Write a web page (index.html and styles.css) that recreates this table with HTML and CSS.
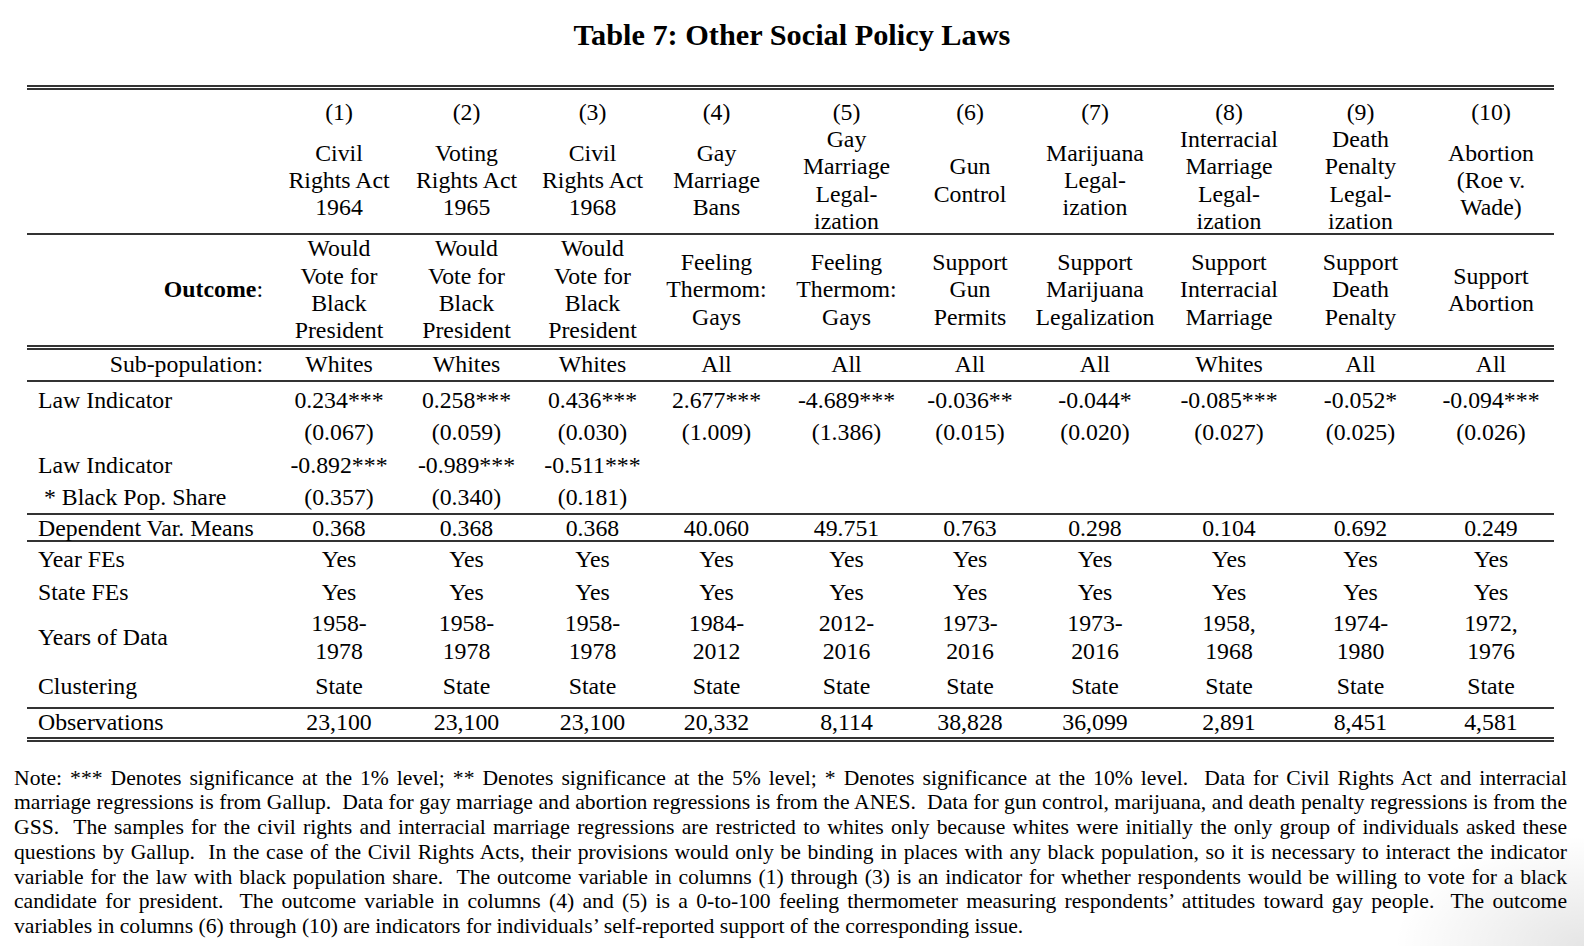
FILE: index.html
```html
<!DOCTYPE html>
<html lang="en">
<head>
<meta charset="utf-8">
<title>Table 7: Other Social Policy Laws</title>
<link rel="stylesheet" href="styles.css">
</head>
<body>
<main class="page">
  <h1 class="title">Table 7: Other Social Policy Laws</h1>

  <div class="tbl">
    <div class="rule-double"></div>

    <div class="row h-num">
      <div class="lab"></div>
      <div>(1)</div><div>(2)</div><div>(3)</div><div>(4)</div><div>(5)</div>
      <div>(6)</div><div>(7)</div><div>(8)</div><div>(9)</div><div>(10)</div>
    </div>

    <div class="row h-name">
      <div class="lab"></div>
      <div>Civil<br>Rights Act<br>1964</div>
      <div>Voting<br>Rights Act<br>1965</div>
      <div>Civil<br>Rights Act<br>1968</div>
      <div>Gay<br>Marriage<br>Bans</div>
      <div>Gay<br>Marriage<br>Legal-<br>ization</div>
      <div>Gun<br>Control</div>
      <div>Marijuana<br>Legal-<br>ization</div>
      <div>Interracial<br>Marriage<br>Legal-<br>ization</div>
      <div>Death<br>Penalty<br>Legal-<br>ization</div>
      <div>Abortion<br>(Roe v.<br>Wade)</div>
    </div>

    <div class="rule"></div>

    <div class="row h-out">
      <div class="lab-r"><b>Outcome</b>:</div>
      <div>Would<br>Vote for<br>Black<br>President</div>
      <div>Would<br>Vote for<br>Black<br>President</div>
      <div>Would<br>Vote for<br>Black<br>President</div>
      <div>Feeling<br>Thermom:<br>Gays</div>
      <div>Feeling<br>Thermom:<br>Gays</div>
      <div>Support<br>Gun<br>Permits</div>
      <div>Support<br>Marijuana<br>Legalization</div>
      <div>Support<br>Interracial<br>Marriage</div>
      <div>Support<br>Death<br>Penalty</div>
      <div>Support<br>Abortion</div>
    </div>

    <div class="rule-double"></div>

    <div class="row h-sub">
      <div class="lab-r">Sub-population:</div>
      <div>Whites</div><div>Whites</div><div>Whites</div><div>All</div><div>All</div>
      <div>All</div><div>All</div><div>Whites</div><div>All</div><div>All</div>
    </div>

    <div class="rule"></div>

    <div class="coef">
      <div class="row h-c1">
        <div class="lab">Law Indicator</div>
        <div>0.234***</div><div>0.258***</div><div>0.436***</div><div>2.677***</div><div>-4.689***</div>
        <div>-0.036**</div><div>-0.044*</div><div>-0.085***</div><div>-0.052*</div><div>-0.094***</div>
      </div>
      <div class="row h-c2">
        <div class="lab"></div>
        <div>(0.067)</div><div>(0.059)</div><div>(0.030)</div><div>(1.009)</div><div>(1.386)</div>
        <div>(0.015)</div><div>(0.020)</div><div>(0.027)</div><div>(0.025)</div><div>(0.026)</div>
      </div>
      <div class="row h-c3">
        <div class="lab">Law Indicator</div>
        <div>-0.892***</div><div>-0.989***</div><div>-0.511***</div><div></div><div></div>
        <div></div><div></div><div></div><div></div><div></div>
      </div>
      <div class="row h-c4">
        <div class="lab lab-in">* Black Pop. Share</div>
        <div>(0.357)</div><div>(0.340)</div><div>(0.181)</div><div></div><div></div>
        <div></div><div></div><div></div><div></div><div></div>
      </div>
    </div>

    <div class="rule"></div>

    <div class="row h-dep">
      <div class="lab">Dependent Var. Means</div>
      <div>0.368</div><div>0.368</div><div>0.368</div><div>40.060</div><div>49.751</div>
      <div>0.763</div><div>0.298</div><div>0.104</div><div>0.692</div><div>0.249</div>
    </div>

    <div class="rule"></div>

    <div class="row h-year">
      <div class="lab">Year FEs</div>
      <div>Yes</div><div>Yes</div><div>Yes</div><div>Yes</div><div>Yes</div>
      <div>Yes</div><div>Yes</div><div>Yes</div><div>Yes</div><div>Yes</div>
    </div>
    <div class="row h-state">
      <div class="lab">State FEs</div>
      <div>Yes</div><div>Yes</div><div>Yes</div><div>Yes</div><div>Yes</div>
      <div>Yes</div><div>Yes</div><div>Yes</div><div>Yes</div><div>Yes</div>
    </div>
    <div class="row h-years">
      <div class="lab">Years of Data</div>
      <div>1958-<br>1978</div><div>1958-<br>1978</div><div>1958-<br>1978</div><div>1984-<br>2012</div><div>2012-<br>2016</div>
      <div>1973-<br>2016</div><div>1973-<br>2016</div><div>1958,<br>1968</div><div>1974-<br>1980</div><div>1972,<br>1976</div>
    </div>
    <div class="row h-clus">
      <div class="lab">Clustering</div>
      <div>State</div><div>State</div><div>State</div><div>State</div><div>State</div>
      <div>State</div><div>State</div><div>State</div><div>State</div><div>State</div>
    </div>

    <div class="rule"></div>

    <div class="row h-obs">
      <div class="lab">Observations</div>
      <div>23,100</div><div>23,100</div><div>23,100</div><div>20,332</div><div>8,114</div>
      <div>38,828</div><div>36,099</div><div>2,891</div><div>8,451</div><div>4,581</div>
    </div>

    <div class="rule-double"></div>
  </div>

  <p class="note">
    <span class="ln">Note: *** Denotes significance at the 1% level; ** Denotes significance at the 5% level; * Denotes significance at the 10% level.&nbsp; Data for Civil Rights Act and interracial</span>
    <span class="ln">marriage regressions is from Gallup.&nbsp; Data for gay marriage and abortion regressions is from the ANES.&nbsp; Data for gun control, marijuana, and death penalty regressions is from the</span>
    <span class="ln">GSS.&nbsp; The samples for the civil rights and interracial marriage regressions are restricted to whites only because whites were initially the only group of individuals asked these</span>
    <span class="ln">questions by Gallup.&nbsp; In the case of the Civil Rights Acts, their provisions would only be binding in places with any black population, so it is necessary to interact the indicator</span>
    <span class="ln">variable for the law with black population share.&nbsp; The outcome variable in columns (1) through (3) is an indicator for whether respondents would be willing to vote for a black</span>
    <span class="ln">candidate for president.&nbsp; The outcome variable in columns (4) and (5) is a 0-to-100 feeling thermometer measuring respondents’ attitudes toward gay people.&nbsp; The outcome</span>
    <span class="ln last">variables in columns (6) through (10) are indicators for individuals’ self-reported support of the corresponding issue.</span>
  </p>
</main>
</body>
</html>
```

FILE: styles.css
```css
* {
  box-sizing: border-box;
  margin: 0;
  padding: 0;
}

html {
  background: #fff;
}

body {
  width: 1584px;
  height: 946px;
  overflow: hidden;
  font-family: "Liberation Serif", "Times New Roman", serif;
  color: #000;
  background:
    radial-gradient(ellipse 190px 110px at 100% 100%, rgba(0, 0, 0, 0.10), rgba(0, 0, 0, 0) 100%),
    #fff;
}

.page {
  display: flex;
  flex-direction: column;
}

.title {
  margin-top: 18px;
  height: 34px;
  line-height: 34px;
  font-size: 30.3px;
  font-weight: bold;
  text-align: center;
}

.tbl {
  margin: 33px 0 0 27px;
  width: 1527px;
  font-size: 23.8px;
  line-height: 27.3px;
}

.row {
  display: grid;
  grid-template-columns: 248px 128px 127px 125px 123px 137px 110px 140px 128px 135px 126px;
  align-items: center;
}

.row > div {
  text-align: center;
  white-space: nowrap;
}

.row > .lab {
  text-align: left;
  padding-left: 11px;
}

.row > .lab-in {
  padding-left: 17px;
}

.row > .lab-r {
  text-align: right;
  padding-right: 12px;
}

.rule {
  height: 2px;
  background: #333;
}

.rule-double {
  height: 5px;
  border-top: 2px solid #333;
  border-bottom: 2px solid #333;
}

.h-num { height: 36px; align-items: end; }
.h-name { height: 107px; }
.h-out { height: 110px; }
.h-sub { height: 30px; }

.coef { padding-top: 3px; }
.h-c1 { height: 32px; }
.h-c2 { height: 32px; }
.h-c3 { height: 33px; }
.h-c4 { height: 31px; }

.h-dep { height: 25px; }
.h-year { height: 36px; }
.h-state { height: 30px; }
.h-years { height: 59px; }
.h-clus { height: 40px; }
.h-obs { height: 28px; }

.note {
  margin: 23.5px 0 0 14px;
  width: 1553px;
  font-size: 21.65px;
  line-height: 24.75px;
}

.ln {
  display: block;
  white-space: nowrap;
  text-align: justify;
  text-align-last: justify;
}

.ln.last {
  text-align-last: left;
}
```
